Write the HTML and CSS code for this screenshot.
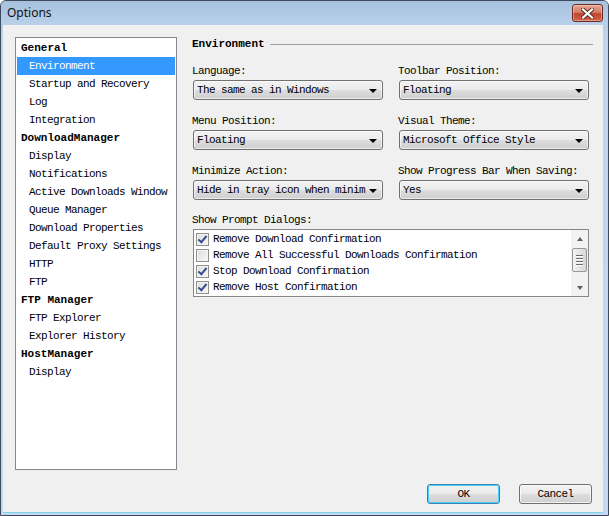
FILE: index.html
```html
<!DOCTYPE html>
<html>
<head>
<meta charset="utf-8">
<link rel="stylesheet" href="styles.css">
</head>
<body>
<div class="window">
  <div class="titlebar">
    <span class="title">Options</span>
    <span class="close"><svg width="13" height="11" viewBox="0 0 13 11"><path d="M2 1.5 L11 9.5 M11 1.5 L2 9.5" stroke="#5a2a22" stroke-width="4" stroke-linecap="square"/><path d="M2 1.5 L11 9.5 M11 1.5 L2 9.5" stroke="#ffffff" stroke-width="2.2" stroke-linecap="square"/></svg></span>
  </div>
  <div class="client">
    <div class="main">
      <div class="tree">
        <div class="node group">General</div>
        <div class="node sub selected">Environment</div>
        <div class="node sub">Startup and Recovery</div>
        <div class="node sub">Log</div>
        <div class="node sub">Integration</div>
        <div class="node group">DownloadManager</div>
        <div class="node sub">Display</div>
        <div class="node sub">Notifications</div>
        <div class="node sub">Active Downloads Window</div>
        <div class="node sub">Queue Manager</div>
        <div class="node sub">Download Properties</div>
        <div class="node sub">Default Proxy Settings</div>
        <div class="node sub">HTTP</div>
        <div class="node sub">FTP</div>
        <div class="node group">FTP Manager</div>
        <div class="node sub">FTP Explorer</div>
        <div class="node sub">Explorer History</div>
        <div class="node group">HostManager</div>
        <div class="node sub">Display</div>
      </div>
      <div class="panel">
        <div class="heading">Environment</div>
        <div class="fields">
          <div class="field">
            <div class="label">Language:</div>
            <div class="combo"><span class="value">The same as in Windows</span><span class="arrow"></span></div>
          </div>
          <div class="field">
            <div class="label">Toolbar Position:</div>
            <div class="combo"><span class="value">Floating</span><span class="arrow"></span></div>
          </div>
          <div class="field">
            <div class="label">Menu Position:</div>
            <div class="combo"><span class="value">Floating</span><span class="arrow"></span></div>
          </div>
          <div class="field">
            <div class="label">Visual Theme:</div>
            <div class="combo"><span class="value">Microsoft Office Style</span><span class="arrow"></span></div>
          </div>
          <div class="field">
            <div class="label">Minimize Action:</div>
            <div class="combo"><span class="value">Hide in tray icon when minim</span><span class="arrow"></span></div>
          </div>
          <div class="field">
            <div class="label">Show Progress Bar When Saving:</div>
            <div class="combo"><span class="value">Yes</span><span class="arrow"></span></div>
          </div>
        </div>
        <div class="field prompts">
          <div class="label">Show Prompt Dialogs:</div>
          <div class="listbox">
            <div class="items">
              <div class="item"><span class="check on"></span>Remove Download Confirmation</div>
              <div class="item"><span class="check"></span>Remove All Successful Downloads Confirmation</div>
              <div class="item"><span class="check on"></span>Stop Download Confirmation</div>
              <div class="item"><span class="check on"></span>Remove Host Confirmation</div>
            </div>
            <div class="scrollbar">
              <span class="sarrow up"></span>
              <span class="track"><span class="thumb"><i></i><i></i><i></i><i></i></span></span>
              <span class="sarrow down"></span>
            </div>
          </div>
        </div>
      </div>
    </div>
    <div class="footer">
      <div class="button default">OK</div>
      <div class="button">Cancel</div>
    </div>
  </div>
</div>
</body>
</html>
```
FILE: styles.css
```css
html, body {
  margin: 0;
  padding: 0;
  background: #ffffff;
}
.window {
  width: 609px;
  height: 516px;
  box-sizing: border-box;
  display: flex;
  flex-direction: column;
  background: linear-gradient(#a9c3e0, #c0d5ec 40px, #c4d9ef);
  border: 1px solid #3d4b5c;
  border-radius: 6px 6px 0 0;
  overflow: hidden;
}
.titlebar {
  height: 24px;
  display: flex;
  justify-content: space-between;
  align-items: flex-start;
  background: linear-gradient(#a7c1de, #b9d0ea 24px);
}
.title {
  font-family: "Noto Sans", "Open Sans", sans-serif;
  font-size: 12px;
  color: #111;
  margin: 4px 0 0 6px;
  line-height: 16px;
}
.close {
  width: 29px;
  height: 16px;
  margin: 3px 5px 0 0;
  border: 1px solid #6e2a20;
  border-radius: 3px;
  background: linear-gradient(#e8a493, #d47e69 45%, #c0452c 55%, #d3644a);
  display: flex;
  align-items: center;
  justify-content: center;
  box-shadow: inset 0 0 0 1px rgba(255,255,255,0.35);
}
.client {
  flex: 1;
  margin: 0 5px 2px 2px;
  background: #f0f0f0;
  border-bottom: 1px solid #7fd3f0;
  padding: 12px 10px 0 12px;
  display: flex;
  flex-direction: column;
  font-family: "Liberation Mono", "DejaVu Sans Mono", monospace;
  font-size: 11px;
  letter-spacing: -0.6px;
  color: #000;
}
.main {
  height: 433px;
  display: flex;
  gap: 15px;
}
.tree {
  width: 162px;
  box-sizing: border-box;
  border: 1px solid #828790;
  background: #fff;
  padding: 1px;
}
.node {
  height: 18px;
  line-height: 18px;
  white-space: nowrap;
}
.group {
  font-weight: bold;
  letter-spacing: 0;
  padding-left: 4px;
}
.sub {
  padding-left: 12px;
}
.selected {
  background: #3399ff;
  color: #fff;
}
.panel {
  flex: 1;
  display: flex;
  flex-direction: column;
}
.heading {
  display: flex;
  align-items: center;
  font-weight: bold;
  letter-spacing: 0;
  height: 14px;
  line-height: 14px;
  margin-bottom: 13px;
}
.heading::after {
  content: "";
  flex: 1;
  border-top: 1px solid #a0a0a0;
  margin-left: 5px;
}
.fields {
  display: grid;
  grid-template-columns: 206px 191px;
  row-gap: 14px;
}
.field {
  display: flex;
  flex-direction: column;
}
.label {
  height: 14px;
  line-height: 14px;
  margin-bottom: 2px;
  white-space: nowrap;
}
.combo {
  width: 190px;
  height: 20px;
  box-sizing: border-box;
  margin-left: 1px;
  border: 1px solid #707070;
  border-radius: 3px;
  background: linear-gradient(#f2f2f2, #ebebeb 50%, #dddddd 51%, #cfcfcf);
  display: flex;
  align-items: center;
  padding: 0 5px 0 3px;
  box-shadow: inset 0 0 0 1px rgba(255,255,255,0.6);
}
.value {
  flex: 1;
  overflow: hidden;
  white-space: nowrap;
}
.arrow {
  width: 0;
  height: 0;
  border-left: 4px solid transparent;
  border-right: 4px solid transparent;
  border-top: 4px solid #000;
  margin-top: 1px;
}
.prompts {
  margin-top: 13px;
}
.listbox {
  margin-left: 1px;
  width: 396px;
  height: 68px;
  box-sizing: border-box;
  border: 1px solid #828790;
  background: #fff;
  display: flex;
}
.items {
  flex: 1;
  padding: 1px 2px;
}
.item {
  height: 16px;
  display: flex;
  align-items: center;
  white-space: nowrap;
}
.check {
  width: 11px;
  height: 11px;
  border: 1px solid #8e8f8f;
  background: linear-gradient(135deg, #dcdcdc, #f8f8f8);
  margin-right: 4px;
  flex: none;
  box-shadow: inset 0 0 0 1px #f4f4f4;
  position: relative;
}
.check.on::after {
  content: "";
  position: absolute;
  left: 3px;
  top: 0px;
  width: 3px;
  height: 7px;
  border-right: 2px solid #3a4f8f;
  border-bottom: 2px solid #3a4f8f;
  transform: rotate(40deg);
}
.scrollbar {
  width: 17px;
  background: #f2f2f2;
  display: flex;
  flex-direction: column;
  align-items: center;
}
.sarrow {
  height: 17px;
  width: 17px;
  display: flex;
  align-items: center;
  justify-content: center;
}
.sarrow::after {
  content: "";
  border-left: 3.5px solid transparent;
  border-right: 3.5px solid transparent;
}
.sarrow.up::after {
  border-bottom: 4px solid #606060;
}
.sarrow.down::after {
  border-top: 4px solid #606060;
}
.track {
  flex: 1;
  width: 17px;
  display: flex;
  justify-content: center;
  align-items: flex-start;
}
.thumb {
  width: 13px;
  height: 22px;
  margin-top: 1px;
  border: 1px solid #979797;
  border-radius: 2px;
  background: linear-gradient(90deg, #f3f3f3, #e4e4e4 50%, #d6d6d6);
  display: flex;
  flex-direction: column;
  align-items: center;
  justify-content: center;
  gap: 1px;
}
.thumb i {
  width: 7px;
  height: 1px;
  background: #6b6b6b;
  border-bottom: 1px solid #ffffff;
}
.footer {
  display: flex;
  justify-content: flex-end;
  gap: 18px;
  margin-top: 14px;
}
.button {
  width: 73px;
  height: 20px;
  box-sizing: border-box;
  border: 1px solid #707070;
  border-radius: 3px;
  background: linear-gradient(#f2f2f2, #ebebeb 50%, #dddddd 51%, #cfcfcf);
  box-shadow: inset 0 0 0 1px rgba(255,255,255,0.7);
  display: flex;
  align-items: center;
  justify-content: center;
  margin-right: 1px;
}
.button.default {
  border-color: #3c7fb1;
  box-shadow: inset 0 0 0 1px #48d1ff;
}
```
